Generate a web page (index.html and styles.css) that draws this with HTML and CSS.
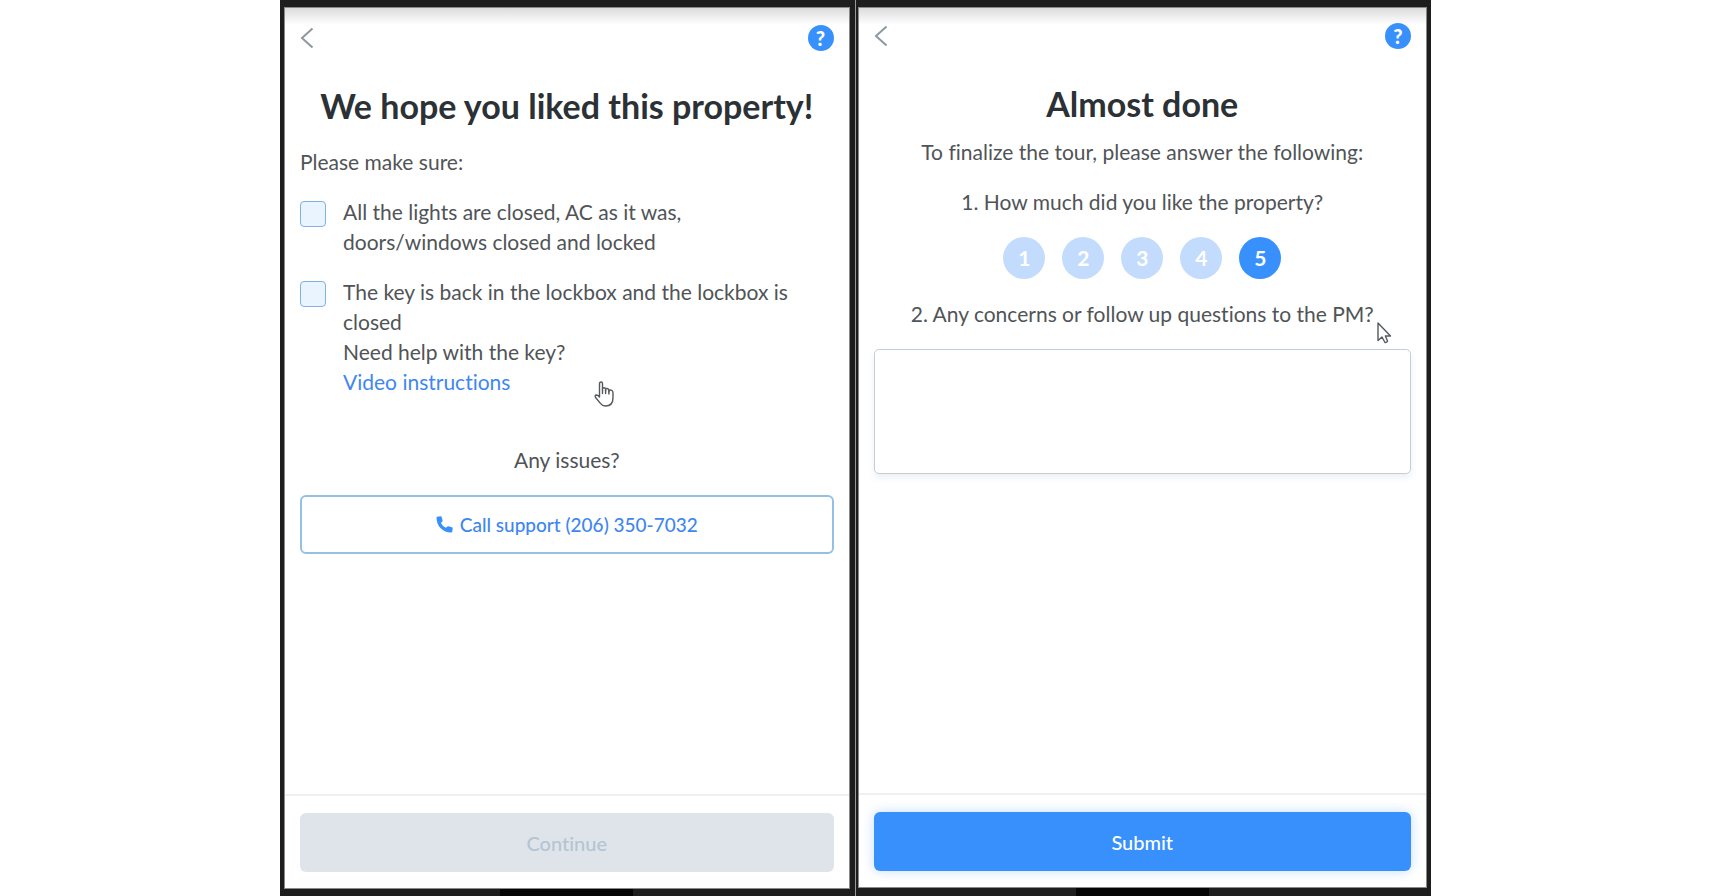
FILE: index.html
```
<!DOCTYPE html>
<html lang="en">
  <head>
    <meta charset="utf-8">
    <meta name="viewport" content="width=device-width, initial-scale=1">
    <title>Property tour</title>
    <link rel="stylesheet" href="styles.css">
  </head>
  <body>
    <main class="stage">
      <div class="phone phoneLeft">
        <section class="screen">
          <div class="topBar">
            <a href="#" class="back" aria-label="Back">
              <svg width="14" height="22" viewBox="0 0 14 22" fill="none" stroke="#8d989f" stroke-width="2"><path d="M12.5 1.5L2 11L12.5 20.5"/></svg>
            </a>
            <button type="button" class="help" aria-label="Help">?</button>
          </div>
          <div class="content">
            <h1>We hope you liked this property!</h1>
            <p class="intro">Please make sure:</p>
            <div class="checkRow">
              <input type="checkbox" id="lights">
              <label for="lights">All the lights are closed, AC as it was,<br>doors/windows closed and locked</label>
            </div>
            <div class="checkRow">
              <input type="checkbox" id="key">
              <div>
                <label for="key">The key is back in the lockbox and the lockbox is closed</label>
                <div>Need help with the key?</div>
                <a href="#">Video instructions</a>
              </div>
            </div>
            <p class="issues">Any issues?</p>
            <a href="tel:+12063507032" class="btn btnOutline">
              <svg width="17" height="17" viewBox="0 0 17 17" fill="#3890fc"><path d="M1.2 0.7L4.6 0.2Q5.3 0.1 5.6 0.8L6.6 4.4Q6.7 4.9 6.3 5.4L4.9 6.9Q6.5 10.1 9.8 11.8L11.4 10.4Q11.8 10 12.4 10.2L16 11.3Q16.8 11.6 16.7 12.4L16.2 15.8Q16 16.6 15.2 16.6C6.8 16.4 0.6 10.2 0.5 1.7Q0.5 0.9 1.2 0.7Z"/></svg>
              Call support (206) 350-7032
            </a>
          </div>
          <div class="footer">
            <button type="button" class="btn" disabled>Continue</button>
          </div>
          <svg class="cursor cursorHand" width="20" height="26" viewBox="0 0 20 26" fill="#fff" stroke="#55585c" stroke-width="1.4" stroke-linejoin="round" stroke-linecap="round"><path d="M5.5 16V2.6Q5.5 1 7 1T8.5 2.6V9V7.4Q10 6 11.6 7.6V10V8Q13.3 6.8 14.9 8.6V11V9.2Q19 8.4 19 12V17Q19 25 11.5 25Q8.3 25 6.4 22.4L1.4 16.2Q0.6 14.3 2.6 14Q4.2 14.2 5.5 16Z"/><path d="M8.5 9V12.5M11.6 9V12.5M14.9 10V13"/></svg>
        </section>
        <div class="homeBar"></div>
      </div>
      <div class="phone phoneRight">
        <form class="screen">
          <div class="topBar">
            <a href="#" class="back" aria-label="Back">
              <svg width="14" height="22" viewBox="0 0 14 22" fill="none" stroke="#8d989f" stroke-width="2"><path d="M12.5 1.5L2 11L12.5 20.5"/></svg>
            </a>
            <button type="button" class="help" aria-label="Help">?</button>
          </div>
          <div class="content centered">
            <h1>Almost done</h1>
            <p class="subtitle">To finalize the tour, please answer the following:</p>
            <p class="question" id="likeLabel">1. How much did you like the property?</p>
            <div class="rating" role="radiogroup" aria-labelledby="likeLabel">
              <label><input type="radio" name="rating" value="1"><span>1</span></label>
              <label><input type="radio" name="rating" value="2"><span>2</span></label>
              <label><input type="radio" name="rating" value="3"><span>3</span></label>
              <label><input type="radio" name="rating" value="4"><span>4</span></label>
              <label><input type="radio" name="rating" value="5" checked><span>5</span></label>
            </div>
            <label class="question" for="concerns">2. Any concerns or follow up questions to the PM?</label>
            <textarea id="concerns"></textarea>
          </div>
          <div class="footer">
            <button type="submit" class="btn btnPrimary">Submit</button>
          </div>
          <svg class="cursor cursorArrow" width="15" height="22" viewBox="0 0 15 22" fill="#fff" stroke="#55585c" stroke-width="1.4" stroke-linejoin="round"><path d="M1 1V18.5L5 15L8 20.5Q9.4 21 10.6 19.2L8.4 14H13.5Z"/></svg>
        </form>
        <div class="homeBar"></div>
      </div>
    </main>
  </body>
</html>
```
FILE: styles.css
```
* {
	box-sizing: border-box;
}

body {
	margin: 0;
	background: #fff;
	color: #505457;
	font-family: Lato, "Open Sans", sans-serif;
	font-size: 21px;
	line-height: 30px;
	font-variant-ligatures: none;
}

h1, p {
	margin: 0;
}

a {
	color: #3f87f0;
	text-decoration: none;
}

.stage {
	display: grid;
	grid-template-columns: 1fr 1fr;
	width: 94%;
	max-width: 1151px;
	min-height: 100vh;
	margin: 0 auto;
	background: #1e1e1e;
}

/* phones */
.phone {
	display: flex;
	flex-direction: column;
	padding-top: 7px;
}

.phoneLeft {
	padding-left: 4px;
	padding-right: 5px;
	border-right: 1px solid #999;
}

.phoneRight {
	padding-left: 2px;
	padding-right: 4px;
}

.screen {
	position: relative;
	flex: 1;
	display: flex;
	flex-direction: column;
	border: 1px solid #8a8a8a;
	background: linear-gradient(#dcdcdc, #fff 17px);
}

.homeBar {
	width: 133px;
	height: 7px;
	margin: 0 auto;
	background: #050505;
}

.phoneRight .homeBar {
	height: 8px;
}

.topBar {
	display: flex;
	justify-content: space-between;
	align-items: center;
	padding: 17px 15px 0;
}

.phoneRight .topBar {
	padding-top: 15px;
}

.back {
	display: flex;
}

.help {
	width: 26px;
	height: 26px;
	padding: 0;
	border: none;
	border-radius: 50%;
	background: #3890fc;
	color: #fff;
	font: 900 20px/26px Lato, sans-serif;
}

.content {
	flex: 1;
	display: flex;
	flex-direction: column;
	padding: 34px 15px 0;
}

h1 {
	color: #2b3135;
	font-size: 34px;
	line-height: 42px;
	text-align: center;
}

.intro {
	margin-top: 20px;
}

.centered {
	align-items: center;
}

/* checklist */
.checkRow {
	display: flex;
	gap: 17px;
	margin-top: 20px;
}

.checkRow input {
	appearance: none;
	flex: none;
	width: 26px;
	height: 26px;
	margin: 4px 0 0;
	border: 1px solid #7fb2e0;
	border-radius: 4px;
	background: #eaf4ff;
}

.checkRow input:checked {
	background: #3890fc;
}

.checkRow label {
	display: block;
}

.issues {
	margin-top: 48px;
	margin-bottom: 20px;
	text-align: center;
}

/* buttons */
.btn {
	display: flex;
	justify-content: center;
	align-items: center;
	gap: 7px;
	width: 100%;
	height: 59px;
	border: none;
	border-radius: 6px;
	font-family: inherit;
	font-size: 20px;
	font-weight: 500;
	font-variant-ligatures: none;
}

.btn:disabled {
	background: #dfe4eb;
	color: #b4c5d1;
}

.btnOutline {
	border: 2px solid #94c0e4;
	font-size: 19px;
}

.btnPrimary {
	background: #3890fc;
	color: #fff;
	box-shadow: 0 0 12px rgba(56, 144, 252, 0.3);
}

.footer {
	padding: 17px 15px 16px;
	border-top: 2px solid #f0f0f0;
}

/* survey */
.subtitle {
	margin-top: 12px;
}

.question {
	margin-top: 20px;
}

.rating {
	display: flex;
	gap: 17px;
	margin-top: 20px;
}

.rating label {
	display: grid;
	cursor: pointer;
}

.rating input {
	appearance: none;
	grid-area: 1 / 1;
	width: 42px;
	height: 42px;
	margin: 0;
	border-radius: 50%;
	background: #c3dcfd;
}

.rating input:checked {
	background: #3890fc;
}

.rating span {
	grid-area: 1 / 1;
	place-self: center;
	color: #fff;
	font-weight: bold;
}

textarea {
	width: 100%;
	height: 125px;
	margin-top: 20px;
	padding: 12px;
	border: 1px solid #c3ced6;
	border-radius: 5px;
	box-shadow: 0 4px 6px rgba(90, 110, 140, 0.1);
	font: inherit;
	resize: none;
}

/* pointers */
.cursor {
	position: absolute;
	pointer-events: none;
}

.cursorHand {
	left: 309px;
	top: 373px;
}

.cursorArrow {
	right: 34px;
	top: 314px;
}
```
